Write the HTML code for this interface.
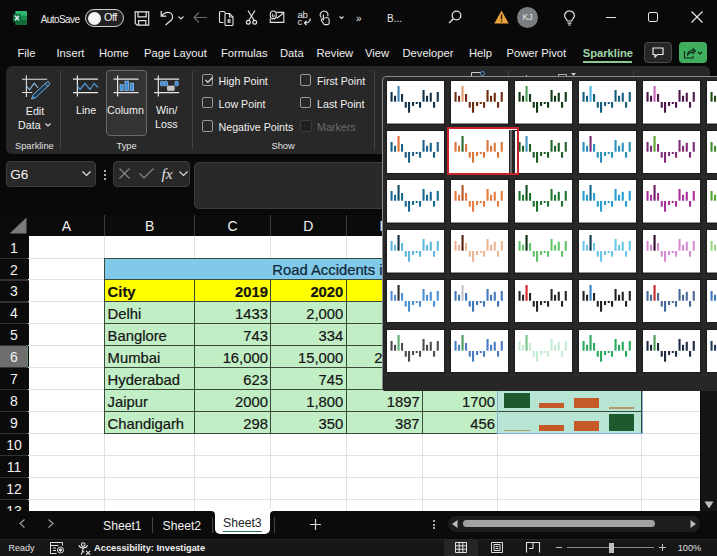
<!DOCTYPE html>
<html><head><meta charset="utf-8">
<style>
*{box-sizing:border-box}
html,body{margin:0;padding:0}
body{width:717px;height:556px;position:relative;overflow:hidden;background:#090909;font-family:"Liberation Sans",sans-serif;color:#e8e8e8}
.a{position:absolute;white-space:nowrap}
svg{position:absolute;overflow:visible}
.menu{top:46px;font-size:11.2px;line-height:14px;color:#f0f0f0}
.rib{background:#282828;border-radius:6px}
.lbl{font-size:10.7px;line-height:12px;color:#f0f0f0}
.glbl{font-size:9.3px;line-height:11px;color:#e0e0e0}
.cb{width:11.8px;height:11.8px;border:1px solid #9a9a9a;border-radius:2px}
.cell{font-size:14.8px;line-height:16px;color:#141414;-webkit-text-stroke:0.2px #141414}
.rh{left:0;width:28px;text-align:center;font-size:14px;line-height:16px;color:#f2f2f2}
</style></head><body>

<!-- TITLE BAR -->
<svg style="left:13px;top:11px" width="14" height="14" viewBox="0 0 14 14"><rect x="2.5" y="0" width="11.5" height="14" rx="1" fill="#1a8a4f"/><rect x="2.5" y="0" width="11.5" height="4.7" rx="1" fill="#2fb673"/><rect x="2.5" y="9.3" width="11.5" height="4.7" fill="#136b3a"/><rect x="0" y="3" width="8" height="8" rx="1" fill="#107040"/><path d="M2 4.8l4 4.4M6 4.8l-4 4.4" stroke="#f2f2f2" stroke-width="1.3"/></svg>
<div class="a" style="left:40.8px;top:13.5px;font-size:10px;line-height:12px;color:#ececec;letter-spacing:-0.6px">AutoSave</div>
<div class="a" style="left:85px;top:9px;width:39px;height:18px;border:1.3px solid #cfcfcf;border-radius:9px;background:#222"></div>
<div class="a" style="left:87.5px;top:11.5px;width:13px;height:13px;border-radius:50%;background:#f4f4f4"></div>
<div class="a" style="left:104px;top:11px;font-size:11px;line-height:12px;color:#f2f2f2;letter-spacing:-0.6px">Off</div>


<!-- save -->
<svg style="left:133.5px;top:10.5px" width="16" height="15" viewBox="0 0 16 15" fill="none" stroke="#e6e6e6" stroke-width="1.2"><path d="M1.2 0.9h13.5v13.3H3.2L1.2 12.2z"/><path d="M4 0.9v4.9h8.2V0.9"/><path d="M4.6 14.2v-4.5h7.2v4.5"/></svg>
<!-- undo -->
<svg style="left:159px;top:10px" width="16" height="16" viewBox="0 0 16 16" fill="none" stroke="#e6e6e6" stroke-width="1.2"><path d="M2.2 1v5.2h5.1"/><path d="M2.5 6C4.3 3.6 6.4 2.4 9 2.4c2.6 0 4.6 2 4.6 4.6 0 1.4-.6 2.5-1.4 3.3L6.5 15"/></svg>
<svg style="left:178px;top:16px" width="6" height="4" viewBox="0 0 6 4" fill="none" stroke="#d8d8d8" stroke-width="1.1"><path d="M0.5 0.5l2.5 2.5 2.5-2.5"/></svg>
<!-- back arrow dim -->
<svg style="left:193px;top:12px" width="14" height="11" viewBox="0 0 14 11" fill="none" stroke="#6a6a6a" stroke-width="1.2"><path d="M14 5.5H1M6 0.5L1 5.5l5 5"/></svg>
<!-- copy doc -->
<svg style="left:218px;top:10px" width="17" height="16" viewBox="0 0 17 16" fill="none" stroke="#e6e6e6" stroke-width="1.1"><path d="M5.5 12.5H2.5a1 1 0 0 1-1-1V2.5a1 1 0 0 1 1-1h3.5a1 1 0 0 1 1 1v1"/><path d="M7 14.5V4.5a1 1 0 0 1 1-1h3.5l3.5 3.5v7.5a1 1 0 0 1-1 1H8a1 1 0 0 1-1-1z"/><path d="M11.5 3.5v3.5H15"/><path d="M9.5 10h3M9.5 12h3" stroke-width="1.3"/></svg>
<!-- scissors -->
<svg style="left:246px;top:10px" width="11" height="15" viewBox="0 0 11 15" fill="none" stroke="#e6e6e6" stroke-width="1.2"><path d="M2 0.5l6.5 10.5M9 0.5L2.5 11"/><circle cx="2.3" cy="12.3" r="1.9"/><circle cx="8.7" cy="12.3" r="1.9"/></svg>
<!-- mail-ish -->
<svg style="left:269px;top:10px" width="16" height="14" viewBox="0 0 16 14" fill="none" stroke="#e6e6e6" stroke-width="1.1"><path d="M7.6 2.4H14.8V12.4H1.2V8.6"/><path d="M7.8 8.2L14.5 3.2"/><path d="M4.25 1a2.95 2.95 0 0 1 2.95 2.95v2a2.95 2.95 0 0 1-5.9 0v-2A2.95 2.95 0 0 1 4.25 1z"/><path d="M3.4 3.6v2.6a.9.9 0 0 0 1.8 0V4.8" stroke-width="0.9"/></svg>
<!-- abc -->
<div class="a" style="left:297.5px;top:10px;font-size:9.6px;line-height:9px;color:#e6e6e6;letter-spacing:-0.3px">ab</div>
<div class="a" style="left:297.5px;top:17px;font-size:9.6px;line-height:9px;color:#e6e6e6">c</div>
<svg style="left:302.5px;top:18px" width="8" height="7" viewBox="0 0 8 7" fill="none" stroke="#e6e6e6" stroke-width="1.2"><path d="M7.2 0.5c0 3-2 4.5-5.5 4.5M3.5 2.8L1.5 5l2 2"/></svg>
<!-- touch -->
<svg style="left:318px;top:9px" width="14" height="17" viewBox="0 0 14 17" fill="none" stroke="#e6e6e6" stroke-width="1.1"><path d="M3.4 8.6A3.8 3.8 0 1 1 9.6 7.3"/><path d="M5.4 5.4v6"/><path d="M5.4 9.4L3.9 10c-.8.4-.7 1.4-.1 2l1.8 2.7c.4.7 1 .9 1.6.9h2.2c1 0 1.7-.7 1.7-1.6v-3.6c0-.9-.6-1.5-1.5-1.6L7.2 8.5"/><path d="M5.6 9.2h1.6" stroke="#9a9a9a" stroke-width="1.3"/></svg>
<svg style="left:339px;top:16px" width="5" height="4" viewBox="0 0 5 4" fill="none" stroke="#d8d8d8" stroke-width="1.1"><path d="M0.5 0.5l2 2 2-2"/></svg>
<div class="a" style="left:356px;top:13px;font-size:10px;line-height:12px;color:#e6e6e6">&raquo;</div>
<div class="a" style="left:387px;top:13px;font-size:10px;line-height:12px;color:#e6e6e6">B...</div>
<!-- search -->
<svg style="left:448px;top:10px" width="14" height="14" viewBox="0 0 14 14" fill="none" stroke="#e6e6e6" stroke-width="1.3"><circle cx="8.5" cy="5.5" r="4.3"/><path d="M5.3 8.7L1 13"/></svg>
<!-- warning -->
<svg style="left:494px;top:10px" width="15" height="14" viewBox="0 0 15 14"><path d="M7.5 0.5L14.7 13.5H0.3z" fill="#e8a33c"/><path d="M7.5 4.5v5" stroke="#2a1a00" stroke-width="1.4"/><circle cx="7.5" cy="11.3" r="0.8" fill="#2a1a00"/></svg>
<!-- avatar -->
<div class="a" style="left:517px;top:7px;width:21px;height:21px;border-radius:50%;background:#787e82;color:#e8e8e8;font-size:8.5px;line-height:21px;text-align:center">KJ</div>
<!-- bulb -->
<svg style="left:563.5px;top:10.5px" width="11" height="15" viewBox="0 0 11 15" fill="none" stroke="#e6e6e6" stroke-width="1.2"><path d="M3.3 10c0-1.8-2.7-2.8-2.7-5.3a4.9 4.9 0 0 1 9.8 0c0 2.5-2.7 3.5-2.7 5.3z"/><path d="M3.6 12.2h3.8M4.2 14h2.6"/></svg>
<!-- window controls -->
<div class="a" style="left:606px;top:17px;width:10px;height:1.2px;background:#e6e6e6"></div>
<div class="a" style="left:648px;top:12px;width:10px;height:10px;border:1.2px solid #e6e6e6;border-radius:2px"></div>
<svg style="left:691px;top:11px" width="12" height="12" viewBox="0 0 12 12" stroke="#e6e6e6" stroke-width="1.2"><path d="M0.5 0.5l11 11M11.5 0.5l-11 11"/></svg>

<!-- MENU -->
<div class="a menu" style="left:17.5px">File</div>
<div class="a menu" style="left:56.5px">Insert</div>
<div class="a menu" style="left:99px">Home</div>
<div class="a menu" style="left:144px">Page Layout</div>
<div class="a menu" style="left:221px">Formulas</div>
<div class="a menu" style="left:280px">Data</div>
<div class="a menu" style="left:316.5px">Review</div>
<div class="a menu" style="left:365px">View</div>
<div class="a menu" style="left:402.5px">Developer</div>
<div class="a menu" style="left:469px">Help</div>
<div class="a menu" style="left:506.5px">Power Pivot</div>
<div class="a menu" style="left:582.7px;top:45.5px;color:#a3d6ab;font-weight:bold;font-size:11.2px">Sparkline</div>
<div class="a" style="left:582.7px;top:61.2px;width:49.3px;height:1.6px;background:#8cc796"></div>
<div class="a" style="left:644px;top:41.7px;width:28px;height:21.3px;border:1px solid #4a4a4a;border-radius:4px;background:#262626"></div>
<svg style="left:652px;top:46.5px" width="12" height="12" viewBox="0 0 12 12" fill="none" stroke="#ececec" stroke-width="1.2"><path d="M1 1h10v6.5H5.5L3 10V7.5H1z"/></svg>
<div class="a" style="left:679px;top:41.7px;width:28px;height:21.3px;border-radius:4px;background:#3fae5e"></div>
<svg style="left:683px;top:46px" width="20" height="13" viewBox="0 0 20 13" fill="none" stroke="#0e2a16" stroke-width="1.1"><path d="M1.5 5v7h8.5V10"/><path d="M4.5 9c0-3 2-4.5 5.5-4.5V2.5L12.5 5 10 7.5V6C7.5 6 6 7 4.5 9z"/><path d="M15 6l2 2 2-2"/></svg>

<!-- RIBBON -->
<div class="a rib" style="left:6px;top:66px;width:704px;height:87.5px"></div>
<div class="a" style="left:632.5px;top:71px;width:1px;height:6px;background:#454545"></div>
<div class="a" style="left:59.5px;top:71px;width:1px;height:78px;background:#454545"></div>
<div class="a" style="left:192px;top:71px;width:1px;height:78px;background:#454545"></div>
<div class="a" style="left:373.8px;top:71px;width:1px;height:78px;background:#454545"></div>
<div class="a" style="left:508px;top:71px;width:1px;height:6px;background:#454545"></div>
<!-- edit data icon -->
<svg style="left:21px;top:75px" width="30" height="26" viewBox="0 0 30 26" fill="none"><path d="M5.4 0.2v21.7M1 4.3h25.2M1 17.5h10.3" stroke="#e0e0e0" stroke-width="1.1"/><path d="M5.6 11l2.8 3.8 4.8-6.7 3.8 4.6" stroke="#8fc0ea" stroke-width="1.1"/><path d="M10.5 24L11.82 20.29 25.77 7.19A1.8 1.8 0 0 1 28.23 9.81L14.28 22.91z" fill="#17344f" stroke="#8fc0ea" stroke-width="0.9"/><path d="M10.5 24l1.2-3.4 2.3 2.2z" fill="#3f8fd8"/><path d="M26.6 11.3l-2.4-2.6" stroke="#8fc0ea" stroke-width="0.8"/></svg>
<div class="a lbl" style="left:23px;top:105px;width:24px;text-align:center">Edit</div>
<div class="a lbl" style="left:18px;top:119px">Data</div>
<svg style="left:45px;top:123px" width="6" height="4" viewBox="0 0 6 4" fill="none" stroke="#e0e0e0" stroke-width="1.1"><path d="M0.5 0.5l2.5 2.5 2.5-2.5"/></svg>
<div class="a glbl" style="left:15px;top:140.5px">Sparkline</div>
<!-- line icon -->
<svg style="left:72px;top:75px" width="27" height="22" viewBox="0 0 27 22" fill="none"><path d="M5.4 0.5v21M1 4.2h25M1 17.6h25" stroke="#e6e6e6" stroke-width="1.2"/><path d="M5.5 11l2.5 3.5 5-6 5 6 4-6 4 4" stroke="#4f95d3" stroke-width="1.2"/></svg>
<div class="a lbl" style="left:76px;top:104px">Line</div>
<!-- column selected -->
<div class="a" style="left:105.7px;top:69.5px;width:41.3px;height:66.6px;border:1px solid #686868;border-radius:4px;background:#333"></div>
<svg style="left:113px;top:75px" width="27" height="22" viewBox="0 0 27 22" fill="none"><path d="M4.6 0.5v21M0.5 4.2h25M0.5 17.6h25" stroke="#e6e6e6" stroke-width="1.2"/><rect x="7" y="9.7" width="3.2" height="5.8" fill="#3b8ad6" stroke="#8cc0ef" stroke-width="0.8"/><rect x="12" y="6.2" width="3.4" height="9.3" fill="#3b8ad6" stroke="#8cc0ef" stroke-width="0.8"/><rect x="17.2" y="8.2" width="3.4" height="7.3" fill="#3b8ad6" stroke="#8cc0ef" stroke-width="0.8"/></svg>
<div class="a lbl" style="left:107px;top:104px">Column</div>
<!-- win/loss -->
<svg style="left:154px;top:75px" width="27" height="22" viewBox="0 0 27 22" fill="none"><path d="M4.3 0.5v21M0.2 4.2h25M0.2 17.6h25" stroke="#e6e6e6" stroke-width="1.2"/><rect x="6.5" y="6.3" width="3.2" height="4.5" rx="0.8" fill="#3b8ad6" stroke="#8cc0ef" stroke-width="0.7"/><rect x="10.3" y="6.3" width="3.2" height="4.5" rx="0.8" fill="#3b8ad6" stroke="#8cc0ef" stroke-width="0.7"/><rect x="13.5" y="11" width="3.2" height="4.5" rx="0.8" fill="#bdbdbd" stroke="#eee" stroke-width="0.7"/><rect x="17" y="11" width="3.2" height="4.5" rx="0.8" fill="#bdbdbd" stroke="#eee" stroke-width="0.7"/><rect x="21" y="6.3" width="3.2" height="4.5" rx="0.8" fill="#3b8ad6" stroke="#8cc0ef" stroke-width="0.7"/></svg>
<div class="a lbl" style="left:156px;top:104px">Win/</div>
<div class="a lbl" style="left:155px;top:118px">Loss</div>
<div class="a glbl" style="left:116.5px;top:140.5px">Type</div>
<!-- show checkboxes -->
<div class="a cb" style="left:201.7px;top:74.2px"></div>
<svg style="left:205px;top:77.2px" width="8" height="6" viewBox="0 0 8 6" fill="none" stroke="#e6e6e6" stroke-width="1.2"><path d="M0.5 3l2.3 2.3L7.5 0.5"/></svg>
<div class="a lbl" style="left:218.5px;top:75px">High Point</div>
<div class="a cb" style="left:201.7px;top:96.7px"></div>
<div class="a lbl" style="left:218.5px;top:98px">Low Point</div>
<div class="a cb" style="left:201.7px;top:120.0px"></div>
<div class="a lbl" style="left:218.5px;top:121px">Negative Points</div>
<div class="a cb" style="left:299.7px;top:74.2px"></div>
<div class="a lbl" style="left:317px;top:75px">First Point</div>
<div class="a cb" style="left:299.7px;top:96.7px"></div>
<div class="a lbl" style="left:317px;top:98px">Last Point</div>
<div class="a cb" style="left:300.2px;top:120.0px;border-color:#3a3a3a;background:#1f1f1f"></div>
<div class="a lbl" style="left:317px;top:121px;color:#6a6a6a">Markers</div>
<div class="a glbl" style="left:271.5px;top:140.5px">Show</div>
<svg style="left:471px;top:71px" width="14" height="6" viewBox="0 0 14 6" fill="none"><path d="M0.5 6V1.5h9" stroke="#cfcfcf" stroke-width="1"/><circle cx="11.5" cy="2.5" r="2" stroke="#4f95d3" stroke-width="1"/></svg>
<div class="a" style="left:525.5px;top:74.5px;width:1.5px;height:1.5px;background:#bbb"></div><div class="a" style="left:558px;top:73.5px;width:9px;height:2.5px;border:1px solid #aaa;border-bottom:none"></div><svg style="left:570.5px;top:73px" width="5" height="3" viewBox="0 0 5 3"><path d="M0 0h5L2.5 3z" fill="#ccc"/></svg>


<!-- FORMULA BAR -->
<div class="a" style="left:6px;top:161px;width:90px;height:25.5px;border:1px solid #3c3c3c;border-radius:4px;background:#282828"></div>
<div class="a" style="left:10.3px;top:167.3px;font-size:13.6px;line-height:16px;color:#f0f0f0">G6</div>
<svg style="left:82px;top:171px" width="9" height="5" viewBox="0 0 9 5" fill="none" stroke="#e0e0e0" stroke-width="1.2"><path d="M0.5 0.5l4 4 4-4"/></svg>
<div class="a" style="left:104px;top:170px;width:1.8px;height:1.8px;background:#e0e0e0;border-radius:1px"></div>
<div class="a" style="left:104px;top:174px;width:1.8px;height:1.8px;background:#e0e0e0;border-radius:1px"></div>
<div class="a" style="left:104px;top:178px;width:1.8px;height:1.8px;background:#e0e0e0;border-radius:1px"></div>
<div class="a" style="left:113px;top:161px;width:76.5px;height:26px;border:1px solid #3c3c3c;border-radius:4px;background:#282828"></div>
<svg style="left:119px;top:168px" width="11" height="11" viewBox="0 0 11 11" stroke="#8a8a8a" stroke-width="1.1"><path d="M0.5 0.5l10 10M10.5 0.5l-10 10"/></svg>
<svg style="left:138.5px;top:168px" width="15" height="11" viewBox="0 0 15 11" fill="none" stroke="#8a8a8a" stroke-width="1.1"><path d="M0.5 5.5l4.5 4.5L14.5 0.5"/></svg>
<div class="a" style="left:161.5px;top:165.5px;font-family:'Liberation Serif',serif;font-style:italic;font-size:15.5px;line-height:16px;color:#e0e0e0">fx</div>
<svg style="left:178.5px;top:171px" width="9" height="5" viewBox="0 0 9 5" fill="none" stroke="#e0e0e0" stroke-width="1.1"><path d="M0.5 0.5l4 4 4-4"/></svg>
<div class="a" style="left:193.5px;top:161.5px;width:600px;height:47px;border:1px solid #3c3c3c;border-radius:5px;background:#292929"></div>


<!-- COLUMN HEADERS -->
<div class="a" style="left:0;top:214.5px;width:717px;height:21.5px;background:#0b0b0b"></div>
<svg style="left:9px;top:217px" width="18" height="17" viewBox="0 0 18 17"><path d="M17.5 0.5V16.5H0.5z" fill="#7a7a7a"/></svg>

<div class="a" style="left:28.0px;top:218px;width:76.6px;text-align:center;font-size:14px;line-height:16px;color:#f0f0f0">A</div>
<div class="a" style="left:104.1px;top:215px;width:1px;height:21px;background:#3a3a3a"></div>
<div class="a" style="left:104.6px;top:218px;width:90.1px;text-align:center;font-size:14px;line-height:16px;color:#f0f0f0">B</div>
<div class="a" style="left:194.2px;top:215px;width:1px;height:21px;background:#3a3a3a"></div>
<div class="a" style="left:194.7px;top:218px;width:75.9px;text-align:center;font-size:14px;line-height:16px;color:#f0f0f0">C</div>
<div class="a" style="left:270.1px;top:215px;width:1px;height:21px;background:#3a3a3a"></div>
<div class="a" style="left:270.6px;top:218px;width:75.4px;text-align:center;font-size:14px;line-height:16px;color:#f0f0f0">D</div>
<div class="a" style="left:345.5px;top:215px;width:1px;height:21px;background:#3a3a3a"></div>
<div class="a" style="left:346.0px;top:218px;width:76.3px;text-align:center;font-size:14px;line-height:16px;color:#f0f0f0">E</div>
<div class="a" style="left:421.8px;top:215px;width:1px;height:21px;background:#3a3a3a"></div>
<div class="a" style="left:422.3px;top:218px;width:75.4px;text-align:center;font-size:14px;line-height:16px;color:#f0f0f0">F</div>
<div class="a" style="left:497.2px;top:215px;width:1px;height:21px;background:#3a3a3a"></div>
<div class="a" style="left:497.7px;top:218px;width:143.3px;text-align:center;font-size:14px;line-height:16px;color:#f0f0f0">G</div>
<div class="a" style="left:640.5px;top:215px;width:1px;height:21px;background:#3a3a3a"></div>
<div class="a" style="left:641.0px;top:218px;width:76.0px;text-align:center;font-size:14px;line-height:16px;color:#f0f0f0">H</div>
<div class="a" style="left:716.5px;top:215px;width:1px;height:21px;background:#3a3a3a"></div>

<!-- GRID -->
<div class="a" style="left:28px;top:236px;width:689px;height:274.5px;background:#fff"></div>
<div class="a" style="left:0;top:236px;width:28.5px;height:274.5px;background:#0b0b0b"></div>
<div class="a" style="left:0;top:345.8px;width:27px;height:22px;background:#6e6e6e"></div>
<div class="a" style="left:27px;top:345.8px;width:1.2px;height:22px;background:#5c8f6a"></div>

<div class="a rh" style="top:239.5px">1</div>
<div class="a" style="left:0;top:257.5px;width:28.5px;height:1.2px;background:#333"></div>
<div class="a" style="left:28px;top:257.5px;width:689px;height:1px;background:#e1e1e1"></div>
<div class="a rh" style="top:261.5px">2</div>
<div class="a" style="left:0;top:279.4px;width:28.5px;height:1.2px;background:#333"></div>
<div class="a" style="left:28px;top:279.4px;width:689px;height:1px;background:#e1e1e1"></div>
<div class="a rh" style="top:283.4px">3</div>
<div class="a" style="left:0;top:301.4px;width:28.5px;height:1.2px;background:#333"></div>
<div class="a" style="left:28px;top:301.4px;width:689px;height:1px;background:#e1e1e1"></div>
<div class="a rh" style="top:305.4px">4</div>
<div class="a" style="left:0;top:323.3px;width:28.5px;height:1.2px;background:#333"></div>
<div class="a" style="left:28px;top:323.3px;width:689px;height:1px;background:#e1e1e1"></div>
<div class="a rh" style="top:327.3px">5</div>
<div class="a" style="left:0;top:345.3px;width:28.5px;height:1.2px;background:#333"></div>
<div class="a" style="left:28px;top:345.3px;width:689px;height:1px;background:#e1e1e1"></div>
<div class="a rh" style="top:349.3px">6</div>
<div class="a" style="left:0;top:367.3px;width:28.5px;height:1.2px;background:#333"></div>
<div class="a" style="left:28px;top:367.3px;width:689px;height:1px;background:#e1e1e1"></div>
<div class="a rh" style="top:371.3px">7</div>
<div class="a" style="left:0;top:389.2px;width:28.5px;height:1.2px;background:#333"></div>
<div class="a" style="left:28px;top:389.2px;width:689px;height:1px;background:#e1e1e1"></div>
<div class="a rh" style="top:393.2px">8</div>
<div class="a" style="left:0;top:411.2px;width:28.5px;height:1.2px;background:#333"></div>
<div class="a" style="left:28px;top:411.2px;width:689px;height:1px;background:#e1e1e1"></div>
<div class="a rh" style="top:415.2px">9</div>
<div class="a" style="left:0;top:433.1px;width:28.5px;height:1.2px;background:#333"></div>
<div class="a" style="left:28px;top:433.1px;width:689px;height:1px;background:#e1e1e1"></div>
<div class="a rh" style="top:437.1px">10</div>
<div class="a" style="left:0;top:455.1px;width:28.5px;height:1.2px;background:#333"></div>
<div class="a" style="left:28px;top:455.1px;width:689px;height:1px;background:#e1e1e1"></div>
<div class="a rh" style="top:459.1px">11</div>
<div class="a" style="left:0;top:477.1px;width:28.5px;height:1.2px;background:#333"></div>
<div class="a" style="left:28px;top:477.1px;width:689px;height:1px;background:#e1e1e1"></div>
<div class="a rh" style="top:481.1px">12</div>
<div class="a" style="left:0;top:499.0px;width:28.5px;height:1.2px;background:#333"></div>
<div class="a" style="left:28px;top:499.0px;width:689px;height:1px;background:#e1e1e1"></div>
<div class="a rh" style="top:503.0px">13</div>
<div class="a" style="left:0;top:521.0px;width:28.5px;height:1.2px;background:#333"></div>
<div class="a" style="left:28px;top:521.0px;width:689px;height:1px;background:#e1e1e1"></div>
<div class="a" style="left:104.1px;top:236px;width:1px;height:274.5px;background:#e1e1e1"></div>
<div class="a" style="left:194.2px;top:236px;width:1px;height:274.5px;background:#e1e1e1"></div>
<div class="a" style="left:270.1px;top:236px;width:1px;height:274.5px;background:#e1e1e1"></div>
<div class="a" style="left:345.5px;top:236px;width:1px;height:274.5px;background:#e1e1e1"></div>
<div class="a" style="left:421.8px;top:236px;width:1px;height:274.5px;background:#e1e1e1"></div>
<div class="a" style="left:497.2px;top:236px;width:1px;height:274.5px;background:#e1e1e1"></div>
<div class="a" style="left:640.5px;top:236px;width:1px;height:274.5px;background:#e1e1e1"></div>
<div class="a" style="left:716.5px;top:236px;width:1px;height:274.5px;background:#e1e1e1"></div>

<!-- TABLE -->
<div class="a" style="left:104.3px;top:258.0px;width:536.7px;height:22.0px;background:#80c9e8"></div>
<div class="a" style="left:104.3px;top:279.9px;width:536.7px;height:22.0px;background:#ffff00"></div>
<div class="a" style="left:104.3px;top:301.9px;width:536.7px;height:131.8px;background:#c1eec5"></div>
<div class="a" style="left:497.7px;top:389.7px;width:144.3px;height:43.9px;background:#b6e6d3"></div>
<div class="a" style="left:104.1px;top:257.5px;width:536.9px;height:1px;background:#3a4a3a"></div>
<div class="a" style="left:104.1px;top:279.4px;width:536.9px;height:1px;background:#3a4a3a"></div>
<div class="a" style="left:104.1px;top:301.4px;width:536.9px;height:1px;background:#3a4a3a"></div>
<div class="a" style="left:104.1px;top:323.3px;width:536.9px;height:1px;background:#3a4a3a"></div>
<div class="a" style="left:104.1px;top:345.3px;width:536.9px;height:1px;background:#3a4a3a"></div>
<div class="a" style="left:104.1px;top:367.3px;width:536.9px;height:1px;background:#3a4a3a"></div>
<div class="a" style="left:104.1px;top:389.2px;width:536.9px;height:1px;background:#3a4a3a"></div>
<div class="a" style="left:104.1px;top:411.2px;width:536.9px;height:1px;background:#3a4a3a"></div>
<div class="a" style="left:104.1px;top:433.1px;width:536.9px;height:1px;background:#3a4a3a"></div>
<div class="a" style="left:104.1px;top:258.0px;width:1px;height:175.7px;background:#3a4a3a"></div>
<div class="a" style="left:194.2px;top:279.9px;width:1px;height:153.7px;background:#3a4a3a"></div>
<div class="a" style="left:270.1px;top:279.9px;width:1px;height:153.7px;background:#3a4a3a"></div>
<div class="a" style="left:345.5px;top:279.9px;width:1px;height:153.7px;background:#3a4a3a"></div>
<div class="a" style="left:421.8px;top:279.9px;width:1px;height:153.7px;background:#3a4a3a"></div>
<div class="a" style="left:497.2px;top:279.9px;width:1px;height:153.7px;background:#3a4a3a"></div>
<div class="a" style="left:640.5px;top:258.0px;width:1px;height:175.7px;background:#3a4a3a"></div>
<div class="a" style="left:497px;top:389.2px;width:145.5px;height:44.6px;border:1.3px solid #86b0de;border-top-color:#5c8db5"></div>
<div class="a cell" style="left:272.3px;top:262.1px;color:#0e2841">Road Accidents in India</div>
<div class="a cell" style="left:107.6px;top:284.0px;font-weight:bold;">City</div>
<div class="a cell" style="right:449.1px;top:284.0px;font-weight:bold;">2019</div>
<div class="a cell" style="right:373.7px;top:284.0px;font-weight:bold;">2020</div>
<div class="a cell" style="right:297.4px;top:284.0px;font-weight:bold;">2021</div>
<div class="a cell" style="right:222.0px;top:284.0px;font-weight:bold;">2022</div>
<div class="a cell" style="left:107.6px;top:306.0px;">Delhi</div>
<div class="a cell" style="right:449.1px;top:306.0px;">1433</div>
<div class="a cell" style="right:373.7px;top:306.0px;">2,000</div>
<div class="a cell" style="right:297.4px;top:306.0px;">1800</div>
<div class="a cell" style="right:222.0px;top:306.0px;">1600</div>
<div class="a cell" style="left:107.6px;top:327.9px;">Banglore</div>
<div class="a cell" style="right:449.1px;top:327.9px;">743</div>
<div class="a cell" style="right:373.7px;top:327.9px;">334</div>
<div class="a cell" style="right:297.4px;top:327.9px;">500</div>
<div class="a cell" style="right:222.0px;top:327.9px;">450</div>
<div class="a cell" style="left:107.6px;top:349.9px;">Mumbai</div>
<div class="a cell" style="right:449.1px;top:349.9px;">16,000</div>
<div class="a cell" style="right:373.7px;top:349.9px;">15,000</div>
<div class="a cell" style="right:297.4px;top:349.9px;">20,000</div>
<div class="a cell" style="right:222.0px;top:349.9px;">18,000</div>
<div class="a cell" style="left:107.6px;top:371.9px;">Hyderabad</div>
<div class="a cell" style="right:449.1px;top:371.9px;">623</div>
<div class="a cell" style="right:373.7px;top:371.9px;">745</div>
<div class="a cell" style="right:297.4px;top:371.9px;">700</div>
<div class="a cell" style="right:222.0px;top:371.9px;">650</div>
<div class="a cell" style="left:107.6px;top:393.8px;">Jaipur</div>
<div class="a cell" style="right:449.1px;top:393.8px;">2000</div>
<div class="a cell" style="right:373.7px;top:393.8px;">1,800</div>
<div class="a cell" style="right:297.4px;top:393.8px;">1897</div>
<div class="a cell" style="right:222.0px;top:393.8px;">1700</div>
<div class="a cell" style="left:107.6px;top:415.8px;">Chandigarh</div>
<div class="a cell" style="right:449.1px;top:415.8px;">298</div>
<div class="a cell" style="right:373.7px;top:415.8px;">350</div>
<div class="a cell" style="right:297.4px;top:415.8px;">387</div>
<div class="a cell" style="right:222.0px;top:415.8px;">456</div>

<div class="a" style="left:504px;top:393.3px;width:25.5px;height:15.1px;background:#1c5a2e"></div>
<div class="a" style="left:539px;top:402.9px;width:25.3px;height:5.5px;background:#c55a28"></div>
<div class="a" style="left:574px;top:398.4px;width:25.4px;height:10px;background:#c55a28"></div>
<div class="a" style="left:609px;top:407.3px;width:25px;height:1.3px;background:#b49a6a"></div>
<div class="a" style="left:504px;top:429.6px;width:25.5px;height:1.3px;background:#b49a6a"></div>
<div class="a" style="left:539px;top:425px;width:25.3px;height:5.8px;background:#c55a28"></div>
<div class="a" style="left:574px;top:421px;width:25.4px;height:9.8px;background:#c55a28"></div>
<div class="a" style="left:609px;top:414px;width:25px;height:16.8px;background:#1c5a2e"></div>


<!-- SHEET TABS -->
<div class="a" style="left:0;top:510.5px;width:717px;height:27.5px;background:#0b0b0b"></div>
<div class="a" style="left:699.5px;top:236px;width:17.5px;height:274.5px;background:#151515;border-left:1px solid #0a0a0a"></div>
<svg style="left:703.5px;top:500.5px" width="10" height="8" viewBox="0 0 10 8"><path d="M0.5 0.5h9L5 7.5z" fill="#bdbdbd"/></svg>
<svg style="left:19px;top:519px" width="6" height="9" viewBox="0 0 6 9" fill="none" stroke="#a0a0a0" stroke-width="1.1"><path d="M5.5 0.5l-4.5 4 4.5 4"/></svg>
<svg style="left:48px;top:519px" width="6" height="9" viewBox="0 0 6 9" fill="none" stroke="#a0a0a0" stroke-width="1.1"><path d="M0.5 0.5l4.5 4-4.5 4"/></svg>
<div class="a" style="left:103px;top:519px;font-size:12.2px;line-height:15px;color:#f0f0f0">Sheet1</div>
<div class="a" style="left:151.5px;top:517px;width:1px;height:16px;background:#444"></div>
<div class="a" style="left:162.5px;top:519px;font-size:12.2px;line-height:15px;color:#f0f0f0">Sheet2</div>
<div class="a" style="left:212px;top:517px;width:1px;height:16px;background:#444"></div>
<div class="a" style="left:210px;top:510px;width:64.5px;height:5px;background:#fff"></div><div class="a" style="left:204px;top:510.5px;width:10.5px;height:12px;background:#0b0b0b;border-radius:0 4px 0 0"></div><div class="a" style="left:270px;top:510.5px;width:10.5px;height:12px;background:#0b0b0b;border-radius:4px 0 0 0"></div>
<div class="a" style="left:214.5px;top:508px;width:55.5px;height:26px;background:#fff;border-radius:0 0 5px 5px"></div><div class="a" style="left:212px;top:517px;width:1px;height:16px;background:#444"></div><div class="a" style="left:274px;top:517px;width:1px;height:16px;background:#444"></div>
<div class="a" style="left:223px;top:516px;font-size:12.2px;line-height:15px;color:#222">Sheet3</div>
<div class="a" style="left:223px;top:530.6px;width:38.7px;height:1.6px;background:#2f7a52"></div>
<div class="a" style="left:274px;top:517px;width:1px;height:16px;background:#444"></div>
<svg style="left:309.5px;top:518.5px" width="11" height="11" viewBox="0 0 11 11" stroke="#d8d8d8" stroke-width="1.2"><path d="M5.5 0v11M0 5.5h11"/></svg>
<div class="a" style="left:433px;top:520px;width:2px;height:2px;background:#e0e0e0;border-radius:1px"></div>
<div class="a" style="left:433px;top:523.5px;width:2px;height:2px;background:#e0e0e0;border-radius:1px"></div>
<div class="a" style="left:433px;top:527px;width:2px;height:2px;background:#e0e0e0;border-radius:1px"></div>
<div class="a" style="left:448px;top:516px;width:252px;height:16px;background:#1d1d1d;border-radius:8px"></div>
<svg style="left:451.5px;top:519.5px" width="6" height="8" viewBox="0 0 6 8"><path d="M5.5 0v8L0 4z" fill="#bdbdbd"/></svg>
<svg style="left:690px;top:519.5px" width="6" height="8" viewBox="0 0 6 8"><path d="M0.5 0v8L6 4z" fill="#bdbdbd"/></svg>
<div class="a" style="left:462.7px;top:520.2px;width:192.5px;height:7px;background:#a2a2a2;border-radius:3.5px"></div>

<!-- STATUS BAR -->
<div class="a" style="left:0;top:538.5px;width:717px;height:17.5px;background:#161616;border-top:1px solid #262626"></div>
<div class="a" style="left:8.5px;top:543px;font-size:9px;line-height:11px;color:#e0e0e0">Ready</div>
<svg style="left:50px;top:542px" width="14" height="12" viewBox="0 0 14 12" fill="none" stroke="#e0e0e0" stroke-width="1"><path d="M0.5 0.5h12v3M0.5 0.5v11h6M0.5 3.5h8"/><path d="M3 6h3M3 8.5h3"/><circle cx="10.5" cy="8" r="3"/><circle cx="10.5" cy="8" r="1.2" fill="#e0e0e0"/></svg>
<svg style="left:78px;top:542px" width="13" height="13" viewBox="0 0 13 13" fill="none" stroke="#e6e6e6" stroke-width="1.1"><circle cx="5.2" cy="2.6" r="1.8"/><path d="M0.8 3.2C1.8 5.5 3.2 6 5.2 5.8 7.2 6 8.6 5.5 9.6 3.2"/><path d="M5.2 5.8L4.6 9.2 3.2 12.5M4.6 9.2L6.2 10.2"/><path d="M8 8.8l4.2 4M12.2 8.8l-4.2 4"/></svg>
<div class="a" style="left:94px;top:543px;font-size:9.3px;line-height:11px;color:#f0f0f0;font-weight:bold">Accessibility: Investigate</div>
<div class="a" style="left:443.8px;top:539px;width:34.2px;height:17px;background:#262626"></div>
<svg style="left:455px;top:541.5px" width="12" height="11" viewBox="0 0 12 11" fill="none" stroke="#e0e0e0" stroke-width="1"><path d="M0.5 0.5h11v10h-11zM0.5 3.8h11M0.5 7.2h11M4.2 0.5v10M7.8 0.5v10"/></svg>
<svg style="left:491px;top:541.5px" width="12" height="11" viewBox="0 0 12 11" fill="none" stroke="#e0e0e0" stroke-width="1"><path d="M0.5 0.5h11v10h-11z"/><path d="M3 2.5h6v6H3zM4.5 4.5h3M4.5 6.5h3"/></svg>
<svg style="left:525.5px;top:541.5px" width="14" height="11" viewBox="0 0 14 11" fill="none" stroke="#e0e0e0" stroke-width="1.1"><path d="M0.5 10.5V0.5h13v10M7 0.5v6h-4"/></svg>
<div class="a" style="left:555.5px;top:546.5px;width:6px;height:1px;background:#bdbdbd"></div>
<div class="a" style="left:567px;top:546.5px;width:87px;height:1px;background:#8a8a8a"></div>
<div class="a" style="left:608.5px;top:543px;width:5px;height:9.5px;background:#bdbdbd"></div>
<svg style="left:659px;top:543.5px" width="7" height="7" viewBox="0 0 7 7" stroke="#bdbdbd" stroke-width="1"><path d="M3.5 0v7M0 3.5h7"/></svg>
<div class="a" style="left:677.7px;top:543px;font-size:9.2px;line-height:11px;color:#e0e0e0">100%</div>

<!-- GALLERY -->
<div class="a" style="left:382px;top:76px;width:340px;height:315px;background:#272727;border:1px solid #8c8c8c;border-bottom:none;border-right:none;border-radius:5px 0 0 3px"></div>
<div class="a" style="left:382.5px;top:378px;width:340px;height:13px;background:#272727;border-radius:0 0 0 3px;border-left:1px solid #1a1a1a"></div>
<svg style="left:386.8px;top:81.0px;outline:1px solid #1b1b1b" width="57.5" height="42.5"><rect width="57.5" height="42.5" fill="#fff"/><rect x="3.5" y="11.0" width="2.1" height="9.7" fill="#13324a"/><rect x="7.0" y="14.8" width="2.1" height="5.9" fill="#13324a"/><rect x="10.5" y="5.0" width="2.1" height="15.7" fill="#3f82b5"/><rect x="14.0" y="13.0" width="2.1" height="7.7" fill="#13324a"/><rect x="17.7" y="21.0" width="2.1" height="5.7" fill="#13324a"/><rect x="21.0" y="21.0" width="2.1" height="10.7" fill="#13324a"/><rect x="25.0" y="21.0" width="2.1" height="4.0" fill="#13324a"/><rect x="28.7" y="21.0" width="2.1" height="2.0" fill="#13324a"/><rect x="32.0" y="21.0" width="2.1" height="5.7" fill="#13324a"/><rect x="35.5" y="9.0" width="2.1" height="11.7" fill="#13324a"/><rect x="39.0" y="14.8" width="2.1" height="5.9" fill="#13324a"/><rect x="42.7" y="11.8" width="2.1" height="8.9" fill="#13324a"/><rect x="46.0" y="21.0" width="2.1" height="5.7" fill="#13324a"/><rect x="49.7" y="11.0" width="2.1" height="9.7" fill="#13324a"/></svg>
<svg style="left:450.8px;top:81.0px;outline:1px solid #1b1b1b" width="57.5" height="42.5"><rect width="57.5" height="42.5" fill="#fff"/><rect x="3.5" y="11.0" width="2.1" height="9.7" fill="#6b2d0e"/><rect x="7.0" y="14.8" width="2.1" height="5.9" fill="#6b2d0e"/><rect x="10.5" y="5.0" width="2.1" height="15.7" fill="#e39a6c"/><rect x="14.0" y="13.0" width="2.1" height="7.7" fill="#6b2d0e"/><rect x="17.7" y="21.0" width="2.1" height="5.7" fill="#6b2d0e"/><rect x="21.0" y="21.0" width="2.1" height="10.7" fill="#6b2d0e"/><rect x="25.0" y="21.0" width="2.1" height="4.0" fill="#6b2d0e"/><rect x="28.7" y="21.0" width="2.1" height="2.0" fill="#6b2d0e"/><rect x="32.0" y="21.0" width="2.1" height="5.7" fill="#6b2d0e"/><rect x="35.5" y="9.0" width="2.1" height="11.7" fill="#6b2d0e"/><rect x="39.0" y="14.8" width="2.1" height="5.9" fill="#6b2d0e"/><rect x="42.7" y="11.8" width="2.1" height="8.9" fill="#6b2d0e"/><rect x="46.0" y="21.0" width="2.1" height="5.7" fill="#6b2d0e"/><rect x="49.7" y="11.0" width="2.1" height="9.7" fill="#6b2d0e"/></svg>
<svg style="left:514.8px;top:81.0px;outline:1px solid #1b1b1b" width="57.5" height="42.5"><rect width="57.5" height="42.5" fill="#fff"/><rect x="3.5" y="11.0" width="2.1" height="9.7" fill="#0f3a15"/><rect x="7.0" y="14.8" width="2.1" height="5.9" fill="#0f3a15"/><rect x="10.5" y="5.0" width="2.1" height="15.7" fill="#4f9a55"/><rect x="14.0" y="13.0" width="2.1" height="7.7" fill="#0f3a15"/><rect x="17.7" y="21.0" width="2.1" height="5.7" fill="#0f3a15"/><rect x="21.0" y="21.0" width="2.1" height="10.7" fill="#0f3a15"/><rect x="25.0" y="21.0" width="2.1" height="4.0" fill="#0f3a15"/><rect x="28.7" y="21.0" width="2.1" height="2.0" fill="#0f3a15"/><rect x="32.0" y="21.0" width="2.1" height="5.7" fill="#0f3a15"/><rect x="35.5" y="9.0" width="2.1" height="11.7" fill="#0f3a15"/><rect x="39.0" y="14.8" width="2.1" height="5.9" fill="#0f3a15"/><rect x="42.7" y="11.8" width="2.1" height="8.9" fill="#0f3a15"/><rect x="46.0" y="21.0" width="2.1" height="5.7" fill="#0f3a15"/><rect x="49.7" y="11.0" width="2.1" height="9.7" fill="#0f3a15"/></svg>
<svg style="left:578.8px;top:81.0px;outline:1px solid #1b1b1b" width="57.5" height="42.5"><rect width="57.5" height="42.5" fill="#fff"/><rect x="3.5" y="11.0" width="2.1" height="9.7" fill="#145d80"/><rect x="7.0" y="14.8" width="2.1" height="5.9" fill="#145d80"/><rect x="10.5" y="5.0" width="2.1" height="15.7" fill="#4db3e3"/><rect x="14.0" y="13.0" width="2.1" height="7.7" fill="#145d80"/><rect x="17.7" y="21.0" width="2.1" height="5.7" fill="#145d80"/><rect x="21.0" y="21.0" width="2.1" height="10.7" fill="#145d80"/><rect x="25.0" y="21.0" width="2.1" height="4.0" fill="#145d80"/><rect x="28.7" y="21.0" width="2.1" height="2.0" fill="#145d80"/><rect x="32.0" y="21.0" width="2.1" height="5.7" fill="#145d80"/><rect x="35.5" y="9.0" width="2.1" height="11.7" fill="#145d80"/><rect x="39.0" y="14.8" width="2.1" height="5.9" fill="#145d80"/><rect x="42.7" y="11.8" width="2.1" height="8.9" fill="#145d80"/><rect x="46.0" y="21.0" width="2.1" height="5.7" fill="#145d80"/><rect x="49.7" y="11.0" width="2.1" height="9.7" fill="#145d80"/></svg>
<svg style="left:642.8px;top:81.0px;outline:1px solid #1b1b1b" width="57.5" height="42.5"><rect width="57.5" height="42.5" fill="#fff"/><rect x="3.5" y="11.0" width="2.1" height="9.7" fill="#4e1649"/><rect x="7.0" y="14.8" width="2.1" height="5.9" fill="#4e1649"/><rect x="10.5" y="5.0" width="2.1" height="15.7" fill="#c866b8"/><rect x="14.0" y="13.0" width="2.1" height="7.7" fill="#4e1649"/><rect x="17.7" y="21.0" width="2.1" height="5.7" fill="#4e1649"/><rect x="21.0" y="21.0" width="2.1" height="10.7" fill="#4e1649"/><rect x="25.0" y="21.0" width="2.1" height="4.0" fill="#4e1649"/><rect x="28.7" y="21.0" width="2.1" height="2.0" fill="#4e1649"/><rect x="32.0" y="21.0" width="2.1" height="5.7" fill="#4e1649"/><rect x="35.5" y="9.0" width="2.1" height="11.7" fill="#4e1649"/><rect x="39.0" y="14.8" width="2.1" height="5.9" fill="#4e1649"/><rect x="42.7" y="11.8" width="2.1" height="8.9" fill="#4e1649"/><rect x="46.0" y="21.0" width="2.1" height="5.7" fill="#4e1649"/><rect x="49.7" y="11.0" width="2.1" height="9.7" fill="#4e1649"/></svg>
<svg style="left:706.8px;top:81.0px;outline:1px solid #1b1b1b" width="57.5" height="42.5"><rect width="57.5" height="42.5" fill="#fff"/><rect x="3.5" y="11.0" width="2.1" height="9.7" fill="#1f4a10"/><rect x="7.0" y="14.8" width="2.1" height="5.9" fill="#1f4a10"/><rect x="10.5" y="5.0" width="2.1" height="15.7" fill="#7fc060"/><rect x="14.0" y="13.0" width="2.1" height="7.7" fill="#1f4a10"/><rect x="17.7" y="21.0" width="2.1" height="5.7" fill="#1f4a10"/><rect x="21.0" y="21.0" width="2.1" height="10.7" fill="#1f4a10"/><rect x="25.0" y="21.0" width="2.1" height="4.0" fill="#1f4a10"/><rect x="28.7" y="21.0" width="2.1" height="2.0" fill="#1f4a10"/><rect x="32.0" y="21.0" width="2.1" height="5.7" fill="#1f4a10"/><rect x="35.5" y="9.0" width="2.1" height="11.7" fill="#1f4a10"/><rect x="39.0" y="14.8" width="2.1" height="5.9" fill="#1f4a10"/><rect x="42.7" y="11.8" width="2.1" height="8.9" fill="#1f4a10"/><rect x="46.0" y="21.0" width="2.1" height="5.7" fill="#1f4a10"/><rect x="49.7" y="11.0" width="2.1" height="9.7" fill="#1f4a10"/></svg>
<svg style="left:386.8px;top:130.7px;outline:1px solid #1b1b1b" width="57.5" height="42.5"><rect width="57.5" height="42.5" fill="#fff"/><rect x="3.5" y="11.0" width="2.1" height="9.7" fill="#1c6088"/><rect x="7.0" y="14.8" width="2.1" height="5.9" fill="#1c6088"/><rect x="10.5" y="5.0" width="2.1" height="15.7" fill="#e07030"/><rect x="14.0" y="13.0" width="2.1" height="7.7" fill="#1c6088"/><rect x="17.7" y="21.0" width="2.1" height="5.7" fill="#1c6088"/><rect x="21.0" y="21.0" width="2.1" height="10.7" fill="#1c6088"/><rect x="25.0" y="21.0" width="2.1" height="4.0" fill="#1c6088"/><rect x="28.7" y="21.0" width="2.1" height="2.0" fill="#1c6088"/><rect x="32.0" y="21.0" width="2.1" height="5.7" fill="#1c6088"/><rect x="35.5" y="9.0" width="2.1" height="11.7" fill="#1c6088"/><rect x="39.0" y="14.8" width="2.1" height="5.9" fill="#1c6088"/><rect x="42.7" y="11.8" width="2.1" height="8.9" fill="#1c6088"/><rect x="46.0" y="21.0" width="2.1" height="5.7" fill="#1c6088"/><rect x="49.7" y="11.0" width="2.1" height="9.7" fill="#1c6088"/></svg>
<div class="a" style="left:447px;top:127.3px;width:71.7px;height:47.5px;background:#fff"></div>
<svg style="left:450.8px;top:130.7px" width="57.5" height="42.5"><rect width="57.5" height="42.5" fill="#fff"/><rect x="3.5" y="11.0" width="2.1" height="9.7" fill="#d9743c"/><rect x="7.0" y="14.8" width="2.1" height="5.9" fill="#d9743c"/><rect x="10.5" y="5.0" width="2.1" height="15.7" fill="#2a6a2f"/><rect x="14.0" y="13.0" width="2.1" height="7.7" fill="#d9743c"/><rect x="17.7" y="21.0" width="2.1" height="5.7" fill="#d9743c"/><rect x="21.0" y="21.0" width="2.1" height="10.7" fill="#d9743c"/><rect x="25.0" y="21.0" width="2.1" height="4.0" fill="#d9743c"/><rect x="28.7" y="21.0" width="2.1" height="2.0" fill="#d9743c"/><rect x="32.0" y="21.0" width="2.1" height="5.7" fill="#d9743c"/><rect x="35.5" y="9.0" width="2.1" height="11.7" fill="#d9743c"/><rect x="39.0" y="14.8" width="2.1" height="5.9" fill="#d9743c"/><rect x="42.7" y="11.8" width="2.1" height="8.9" fill="#d9743c"/><rect x="46.0" y="21.0" width="2.1" height="5.7" fill="#d9743c"/><rect x="49.7" y="11.0" width="2.1" height="9.7" fill="#d9743c"/></svg>
<svg style="left:514.8px;top:130.7px;outline:1px solid #1b1b1b" width="57.5" height="42.5"><rect width="57.5" height="42.5" fill="#fff"/><rect x="3.5" y="11.0" width="2.1" height="9.7" fill="#1f5f28"/><rect x="7.0" y="14.8" width="2.1" height="5.9" fill="#1f5f28"/><rect x="10.5" y="5.0" width="2.1" height="15.7" fill="#3f96c6"/><rect x="14.0" y="13.0" width="2.1" height="7.7" fill="#1f5f28"/><rect x="17.7" y="21.0" width="2.1" height="5.7" fill="#1f5f28"/><rect x="21.0" y="21.0" width="2.1" height="10.7" fill="#1f5f28"/><rect x="25.0" y="21.0" width="2.1" height="4.0" fill="#1f5f28"/><rect x="28.7" y="21.0" width="2.1" height="2.0" fill="#1f5f28"/><rect x="32.0" y="21.0" width="2.1" height="5.7" fill="#1f5f28"/><rect x="35.5" y="9.0" width="2.1" height="11.7" fill="#1f5f28"/><rect x="39.0" y="14.8" width="2.1" height="5.9" fill="#1f5f28"/><rect x="42.7" y="11.8" width="2.1" height="8.9" fill="#1f5f28"/><rect x="46.0" y="21.0" width="2.1" height="5.7" fill="#1f5f28"/><rect x="49.7" y="11.0" width="2.1" height="9.7" fill="#1f5f28"/></svg>
<svg style="left:578.8px;top:130.7px;outline:1px solid #1b1b1b" width="57.5" height="42.5"><rect width="57.5" height="42.5" fill="#fff"/><rect x="3.5" y="11.0" width="2.1" height="9.7" fill="#2a90ba"/><rect x="7.0" y="14.8" width="2.1" height="5.9" fill="#2a90ba"/><rect x="10.5" y="5.0" width="2.1" height="15.7" fill="#7a2a74"/><rect x="14.0" y="13.0" width="2.1" height="7.7" fill="#2a90ba"/><rect x="17.7" y="21.0" width="2.1" height="5.7" fill="#2a90ba"/><rect x="21.0" y="21.0" width="2.1" height="10.7" fill="#2a90ba"/><rect x="25.0" y="21.0" width="2.1" height="4.0" fill="#2a90ba"/><rect x="28.7" y="21.0" width="2.1" height="2.0" fill="#2a90ba"/><rect x="32.0" y="21.0" width="2.1" height="5.7" fill="#2a90ba"/><rect x="35.5" y="9.0" width="2.1" height="11.7" fill="#2a90ba"/><rect x="39.0" y="14.8" width="2.1" height="5.9" fill="#2a90ba"/><rect x="42.7" y="11.8" width="2.1" height="8.9" fill="#2a90ba"/><rect x="46.0" y="21.0" width="2.1" height="5.7" fill="#2a90ba"/><rect x="49.7" y="11.0" width="2.1" height="9.7" fill="#2a90ba"/></svg>
<svg style="left:642.8px;top:130.7px;outline:1px solid #1b1b1b" width="57.5" height="42.5"><rect width="57.5" height="42.5" fill="#fff"/><rect x="3.5" y="11.0" width="2.1" height="9.7" fill="#802a78"/><rect x="7.0" y="14.8" width="2.1" height="5.9" fill="#802a78"/><rect x="10.5" y="5.0" width="2.1" height="15.7" fill="#5fa530"/><rect x="14.0" y="13.0" width="2.1" height="7.7" fill="#802a78"/><rect x="17.7" y="21.0" width="2.1" height="5.7" fill="#802a78"/><rect x="21.0" y="21.0" width="2.1" height="10.7" fill="#802a78"/><rect x="25.0" y="21.0" width="2.1" height="4.0" fill="#802a78"/><rect x="28.7" y="21.0" width="2.1" height="2.0" fill="#802a78"/><rect x="32.0" y="21.0" width="2.1" height="5.7" fill="#802a78"/><rect x="35.5" y="9.0" width="2.1" height="11.7" fill="#802a78"/><rect x="39.0" y="14.8" width="2.1" height="5.9" fill="#802a78"/><rect x="42.7" y="11.8" width="2.1" height="8.9" fill="#802a78"/><rect x="46.0" y="21.0" width="2.1" height="5.7" fill="#802a78"/><rect x="49.7" y="11.0" width="2.1" height="9.7" fill="#802a78"/></svg>
<svg style="left:706.8px;top:130.7px;outline:1px solid #1b1b1b" width="57.5" height="42.5"><rect width="57.5" height="42.5" fill="#fff"/><rect x="3.5" y="11.0" width="2.1" height="9.7" fill="#3f8a2a"/><rect x="7.0" y="14.8" width="2.1" height="5.9" fill="#3f8a2a"/><rect x="10.5" y="5.0" width="2.1" height="15.7" fill="#1c6088"/><rect x="14.0" y="13.0" width="2.1" height="7.7" fill="#3f8a2a"/><rect x="17.7" y="21.0" width="2.1" height="5.7" fill="#3f8a2a"/><rect x="21.0" y="21.0" width="2.1" height="10.7" fill="#3f8a2a"/><rect x="25.0" y="21.0" width="2.1" height="4.0" fill="#3f8a2a"/><rect x="28.7" y="21.0" width="2.1" height="2.0" fill="#3f8a2a"/><rect x="32.0" y="21.0" width="2.1" height="5.7" fill="#3f8a2a"/><rect x="35.5" y="9.0" width="2.1" height="11.7" fill="#3f8a2a"/><rect x="39.0" y="14.8" width="2.1" height="5.9" fill="#3f8a2a"/><rect x="42.7" y="11.8" width="2.1" height="8.9" fill="#3f8a2a"/><rect x="46.0" y="21.0" width="2.1" height="5.7" fill="#3f8a2a"/><rect x="49.7" y="11.0" width="2.1" height="9.7" fill="#3f8a2a"/></svg>
<svg style="left:386.8px;top:180.4px;outline:1px solid #1b1b1b" width="57.5" height="42.5"><rect width="57.5" height="42.5" fill="#fff"/><rect x="3.5" y="11.0" width="2.1" height="9.7" fill="#1a6a90"/><rect x="7.0" y="14.8" width="2.1" height="5.9" fill="#1a6a90"/><rect x="10.5" y="5.0" width="2.1" height="15.7" fill="#0f4a66"/><rect x="14.0" y="13.0" width="2.1" height="7.7" fill="#1a6a90"/><rect x="17.7" y="21.0" width="2.1" height="5.7" fill="#1a6a90"/><rect x="21.0" y="21.0" width="2.1" height="10.7" fill="#1a6a90"/><rect x="25.0" y="21.0" width="2.1" height="4.0" fill="#1a6a90"/><rect x="28.7" y="21.0" width="2.1" height="2.0" fill="#1a6a90"/><rect x="32.0" y="21.0" width="2.1" height="5.7" fill="#1a6a90"/><rect x="35.5" y="9.0" width="2.1" height="11.7" fill="#1a6a90"/><rect x="39.0" y="14.8" width="2.1" height="5.9" fill="#1a6a90"/><rect x="42.7" y="11.8" width="2.1" height="8.9" fill="#1a6a90"/><rect x="46.0" y="21.0" width="2.1" height="5.7" fill="#1a6a90"/><rect x="49.7" y="11.0" width="2.1" height="9.7" fill="#1a6a90"/></svg>
<svg style="left:450.8px;top:180.4px;outline:1px solid #1b1b1b" width="57.5" height="42.5"><rect width="57.5" height="42.5" fill="#fff"/><rect x="3.5" y="11.0" width="2.1" height="9.7" fill="#e57a42"/><rect x="7.0" y="14.8" width="2.1" height="5.9" fill="#e57a42"/><rect x="10.5" y="5.0" width="2.1" height="15.7" fill="#b05520"/><rect x="14.0" y="13.0" width="2.1" height="7.7" fill="#e57a42"/><rect x="17.7" y="21.0" width="2.1" height="5.7" fill="#e57a42"/><rect x="21.0" y="21.0" width="2.1" height="10.7" fill="#e57a42"/><rect x="25.0" y="21.0" width="2.1" height="4.0" fill="#e57a42"/><rect x="28.7" y="21.0" width="2.1" height="2.0" fill="#e57a42"/><rect x="32.0" y="21.0" width="2.1" height="5.7" fill="#e57a42"/><rect x="35.5" y="9.0" width="2.1" height="11.7" fill="#e57a42"/><rect x="39.0" y="14.8" width="2.1" height="5.9" fill="#e57a42"/><rect x="42.7" y="11.8" width="2.1" height="8.9" fill="#e57a42"/><rect x="46.0" y="21.0" width="2.1" height="5.7" fill="#e57a42"/><rect x="49.7" y="11.0" width="2.1" height="9.7" fill="#e57a42"/></svg>
<svg style="left:514.8px;top:180.4px;outline:1px solid #1b1b1b" width="57.5" height="42.5"><rect width="57.5" height="42.5" fill="#fff"/><rect x="3.5" y="11.0" width="2.1" height="9.7" fill="#1f7530"/><rect x="7.0" y="14.8" width="2.1" height="5.9" fill="#1f7530"/><rect x="10.5" y="5.0" width="2.1" height="15.7" fill="#0f4a1a"/><rect x="14.0" y="13.0" width="2.1" height="7.7" fill="#1f7530"/><rect x="17.7" y="21.0" width="2.1" height="5.7" fill="#1f7530"/><rect x="21.0" y="21.0" width="2.1" height="10.7" fill="#1f7530"/><rect x="25.0" y="21.0" width="2.1" height="4.0" fill="#1f7530"/><rect x="28.7" y="21.0" width="2.1" height="2.0" fill="#1f7530"/><rect x="32.0" y="21.0" width="2.1" height="5.7" fill="#1f7530"/><rect x="35.5" y="9.0" width="2.1" height="11.7" fill="#1f7530"/><rect x="39.0" y="14.8" width="2.1" height="5.9" fill="#1f7530"/><rect x="42.7" y="11.8" width="2.1" height="8.9" fill="#1f7530"/><rect x="46.0" y="21.0" width="2.1" height="5.7" fill="#1f7530"/><rect x="49.7" y="11.0" width="2.1" height="9.7" fill="#1f7530"/></svg>
<svg style="left:578.8px;top:180.4px;outline:1px solid #1b1b1b" width="57.5" height="42.5"><rect width="57.5" height="42.5" fill="#fff"/><rect x="3.5" y="11.0" width="2.1" height="9.7" fill="#2aa0d0"/><rect x="7.0" y="14.8" width="2.1" height="5.9" fill="#2aa0d0"/><rect x="10.5" y="5.0" width="2.1" height="15.7" fill="#0a6a90"/><rect x="14.0" y="13.0" width="2.1" height="7.7" fill="#2aa0d0"/><rect x="17.7" y="21.0" width="2.1" height="5.7" fill="#2aa0d0"/><rect x="21.0" y="21.0" width="2.1" height="10.7" fill="#2aa0d0"/><rect x="25.0" y="21.0" width="2.1" height="4.0" fill="#2aa0d0"/><rect x="28.7" y="21.0" width="2.1" height="2.0" fill="#2aa0d0"/><rect x="32.0" y="21.0" width="2.1" height="5.7" fill="#2aa0d0"/><rect x="35.5" y="9.0" width="2.1" height="11.7" fill="#2aa0d0"/><rect x="39.0" y="14.8" width="2.1" height="5.9" fill="#2aa0d0"/><rect x="42.7" y="11.8" width="2.1" height="8.9" fill="#2aa0d0"/><rect x="46.0" y="21.0" width="2.1" height="5.7" fill="#2aa0d0"/><rect x="49.7" y="11.0" width="2.1" height="9.7" fill="#2aa0d0"/></svg>
<svg style="left:642.8px;top:180.4px;outline:1px solid #1b1b1b" width="57.5" height="42.5"><rect width="57.5" height="42.5" fill="#fff"/><rect x="3.5" y="11.0" width="2.1" height="9.7" fill="#a53098"/><rect x="7.0" y="14.8" width="2.1" height="5.9" fill="#a53098"/><rect x="10.5" y="5.0" width="2.1" height="15.7" fill="#6a1a60"/><rect x="14.0" y="13.0" width="2.1" height="7.7" fill="#a53098"/><rect x="17.7" y="21.0" width="2.1" height="5.7" fill="#a53098"/><rect x="21.0" y="21.0" width="2.1" height="10.7" fill="#a53098"/><rect x="25.0" y="21.0" width="2.1" height="4.0" fill="#a53098"/><rect x="28.7" y="21.0" width="2.1" height="2.0" fill="#a53098"/><rect x="32.0" y="21.0" width="2.1" height="5.7" fill="#a53098"/><rect x="35.5" y="9.0" width="2.1" height="11.7" fill="#a53098"/><rect x="39.0" y="14.8" width="2.1" height="5.9" fill="#a53098"/><rect x="42.7" y="11.8" width="2.1" height="8.9" fill="#a53098"/><rect x="46.0" y="21.0" width="2.1" height="5.7" fill="#a53098"/><rect x="49.7" y="11.0" width="2.1" height="9.7" fill="#a53098"/></svg>
<svg style="left:706.8px;top:180.4px;outline:1px solid #1b1b1b" width="57.5" height="42.5"><rect width="57.5" height="42.5" fill="#fff"/><rect x="3.5" y="11.0" width="2.1" height="9.7" fill="#4ea72e"/><rect x="7.0" y="14.8" width="2.1" height="5.9" fill="#4ea72e"/><rect x="10.5" y="5.0" width="2.1" height="15.7" fill="#2a6a18"/><rect x="14.0" y="13.0" width="2.1" height="7.7" fill="#4ea72e"/><rect x="17.7" y="21.0" width="2.1" height="5.7" fill="#4ea72e"/><rect x="21.0" y="21.0" width="2.1" height="10.7" fill="#4ea72e"/><rect x="25.0" y="21.0" width="2.1" height="4.0" fill="#4ea72e"/><rect x="28.7" y="21.0" width="2.1" height="2.0" fill="#4ea72e"/><rect x="32.0" y="21.0" width="2.1" height="5.7" fill="#4ea72e"/><rect x="35.5" y="9.0" width="2.1" height="11.7" fill="#4ea72e"/><rect x="39.0" y="14.8" width="2.1" height="5.9" fill="#4ea72e"/><rect x="42.7" y="11.8" width="2.1" height="8.9" fill="#4ea72e"/><rect x="46.0" y="21.0" width="2.1" height="5.7" fill="#4ea72e"/><rect x="49.7" y="11.0" width="2.1" height="9.7" fill="#4ea72e"/></svg>
<svg style="left:386.8px;top:230.1px;outline:1px solid #1b1b1b" width="57.5" height="42.5"><rect width="57.5" height="42.5" fill="#fff"/><rect x="3.5" y="11.0" width="2.1" height="9.7" fill="#5fb6de"/><rect x="7.0" y="14.8" width="2.1" height="5.9" fill="#5fb6de"/><rect x="10.5" y="5.0" width="2.1" height="15.7" fill="#0f2f40"/><rect x="14.0" y="13.0" width="2.1" height="7.7" fill="#5fb6de"/><rect x="17.7" y="21.0" width="2.1" height="5.7" fill="#5fb6de"/><rect x="21.0" y="21.0" width="2.1" height="10.7" fill="#5fb6de"/><rect x="25.0" y="21.0" width="2.1" height="4.0" fill="#5fb6de"/><rect x="28.7" y="21.0" width="2.1" height="2.0" fill="#5fb6de"/><rect x="32.0" y="21.0" width="2.1" height="5.7" fill="#5fb6de"/><rect x="35.5" y="9.0" width="2.1" height="11.7" fill="#5fb6de"/><rect x="39.0" y="14.8" width="2.1" height="5.9" fill="#5fb6de"/><rect x="42.7" y="11.8" width="2.1" height="8.9" fill="#5fb6de"/><rect x="46.0" y="21.0" width="2.1" height="5.7" fill="#5fb6de"/><rect x="49.7" y="11.0" width="2.1" height="9.7" fill="#5fb6de"/></svg>
<svg style="left:450.8px;top:230.1px;outline:1px solid #1b1b1b" width="57.5" height="42.5"><rect width="57.5" height="42.5" fill="#fff"/><rect x="3.5" y="11.0" width="2.1" height="9.7" fill="#eeb595"/><rect x="7.0" y="14.8" width="2.1" height="5.9" fill="#eeb595"/><rect x="10.5" y="5.0" width="2.1" height="15.7" fill="#5a2010"/><rect x="14.0" y="13.0" width="2.1" height="7.7" fill="#eeb595"/><rect x="17.7" y="21.0" width="2.1" height="5.7" fill="#eeb595"/><rect x="21.0" y="21.0" width="2.1" height="10.7" fill="#eeb595"/><rect x="25.0" y="21.0" width="2.1" height="4.0" fill="#eeb595"/><rect x="28.7" y="21.0" width="2.1" height="2.0" fill="#eeb595"/><rect x="32.0" y="21.0" width="2.1" height="5.7" fill="#eeb595"/><rect x="35.5" y="9.0" width="2.1" height="11.7" fill="#eeb595"/><rect x="39.0" y="14.8" width="2.1" height="5.9" fill="#eeb595"/><rect x="42.7" y="11.8" width="2.1" height="8.9" fill="#eeb595"/><rect x="46.0" y="21.0" width="2.1" height="5.7" fill="#eeb595"/><rect x="49.7" y="11.0" width="2.1" height="9.7" fill="#eeb595"/></svg>
<svg style="left:514.8px;top:230.1px;outline:1px solid #1b1b1b" width="57.5" height="42.5"><rect width="57.5" height="42.5" fill="#fff"/><rect x="3.5" y="11.0" width="2.1" height="9.7" fill="#62c46a"/><rect x="7.0" y="14.8" width="2.1" height="5.9" fill="#62c46a"/><rect x="10.5" y="5.0" width="2.1" height="15.7" fill="#0a2a10"/><rect x="14.0" y="13.0" width="2.1" height="7.7" fill="#62c46a"/><rect x="17.7" y="21.0" width="2.1" height="5.7" fill="#62c46a"/><rect x="21.0" y="21.0" width="2.1" height="10.7" fill="#62c46a"/><rect x="25.0" y="21.0" width="2.1" height="4.0" fill="#62c46a"/><rect x="28.7" y="21.0" width="2.1" height="2.0" fill="#62c46a"/><rect x="32.0" y="21.0" width="2.1" height="5.7" fill="#62c46a"/><rect x="35.5" y="9.0" width="2.1" height="11.7" fill="#62c46a"/><rect x="39.0" y="14.8" width="2.1" height="5.9" fill="#62c46a"/><rect x="42.7" y="11.8" width="2.1" height="8.9" fill="#62c46a"/><rect x="46.0" y="21.0" width="2.1" height="5.7" fill="#62c46a"/><rect x="49.7" y="11.0" width="2.1" height="9.7" fill="#62c46a"/></svg>
<svg style="left:578.8px;top:230.1px;outline:1px solid #1b1b1b" width="57.5" height="42.5"><rect width="57.5" height="42.5" fill="#fff"/><rect x="3.5" y="11.0" width="2.1" height="9.7" fill="#6cc6ea"/><rect x="7.0" y="14.8" width="2.1" height="5.9" fill="#6cc6ea"/><rect x="10.5" y="5.0" width="2.1" height="15.7" fill="#0a3a50"/><rect x="14.0" y="13.0" width="2.1" height="7.7" fill="#6cc6ea"/><rect x="17.7" y="21.0" width="2.1" height="5.7" fill="#6cc6ea"/><rect x="21.0" y="21.0" width="2.1" height="10.7" fill="#6cc6ea"/><rect x="25.0" y="21.0" width="2.1" height="4.0" fill="#6cc6ea"/><rect x="28.7" y="21.0" width="2.1" height="2.0" fill="#6cc6ea"/><rect x="32.0" y="21.0" width="2.1" height="5.7" fill="#6cc6ea"/><rect x="35.5" y="9.0" width="2.1" height="11.7" fill="#6cc6ea"/><rect x="39.0" y="14.8" width="2.1" height="5.9" fill="#6cc6ea"/><rect x="42.7" y="11.8" width="2.1" height="8.9" fill="#6cc6ea"/><rect x="46.0" y="21.0" width="2.1" height="5.7" fill="#6cc6ea"/><rect x="49.7" y="11.0" width="2.1" height="9.7" fill="#6cc6ea"/></svg>
<svg style="left:642.8px;top:230.1px;outline:1px solid #1b1b1b" width="57.5" height="42.5"><rect width="57.5" height="42.5" fill="#fff"/><rect x="3.5" y="11.0" width="2.1" height="9.7" fill="#d68ad2"/><rect x="7.0" y="14.8" width="2.1" height="5.9" fill="#d68ad2"/><rect x="10.5" y="5.0" width="2.1" height="15.7" fill="#2a0a28"/><rect x="14.0" y="13.0" width="2.1" height="7.7" fill="#d68ad2"/><rect x="17.7" y="21.0" width="2.1" height="5.7" fill="#d68ad2"/><rect x="21.0" y="21.0" width="2.1" height="10.7" fill="#d68ad2"/><rect x="25.0" y="21.0" width="2.1" height="4.0" fill="#d68ad2"/><rect x="28.7" y="21.0" width="2.1" height="2.0" fill="#d68ad2"/><rect x="32.0" y="21.0" width="2.1" height="5.7" fill="#d68ad2"/><rect x="35.5" y="9.0" width="2.1" height="11.7" fill="#d68ad2"/><rect x="39.0" y="14.8" width="2.1" height="5.9" fill="#d68ad2"/><rect x="42.7" y="11.8" width="2.1" height="8.9" fill="#d68ad2"/><rect x="46.0" y="21.0" width="2.1" height="5.7" fill="#d68ad2"/><rect x="49.7" y="11.0" width="2.1" height="9.7" fill="#d68ad2"/></svg>
<svg style="left:706.8px;top:230.1px;outline:1px solid #1b1b1b" width="57.5" height="42.5"><rect width="57.5" height="42.5" fill="#fff"/><rect x="3.5" y="11.0" width="2.1" height="9.7" fill="#95d585"/><rect x="7.0" y="14.8" width="2.1" height="5.9" fill="#95d585"/><rect x="10.5" y="5.0" width="2.1" height="15.7" fill="#1a3a10"/><rect x="14.0" y="13.0" width="2.1" height="7.7" fill="#95d585"/><rect x="17.7" y="21.0" width="2.1" height="5.7" fill="#95d585"/><rect x="21.0" y="21.0" width="2.1" height="10.7" fill="#95d585"/><rect x="25.0" y="21.0" width="2.1" height="4.0" fill="#95d585"/><rect x="28.7" y="21.0" width="2.1" height="2.0" fill="#95d585"/><rect x="32.0" y="21.0" width="2.1" height="5.7" fill="#95d585"/><rect x="35.5" y="9.0" width="2.1" height="11.7" fill="#95d585"/><rect x="39.0" y="14.8" width="2.1" height="5.9" fill="#95d585"/><rect x="42.7" y="11.8" width="2.1" height="8.9" fill="#95d585"/><rect x="46.0" y="21.0" width="2.1" height="5.7" fill="#95d585"/><rect x="49.7" y="11.0" width="2.1" height="9.7" fill="#95d585"/></svg>
<svg style="left:386.8px;top:279.8px;outline:1px solid #1b1b1b" width="57.5" height="42.5"><rect width="57.5" height="42.5" fill="#fff"/><rect x="3.5" y="11.0" width="2.1" height="9.7" fill="#4a90d2"/><rect x="7.0" y="14.8" width="2.1" height="5.9" fill="#4a90d2"/><rect x="10.5" y="5.0" width="2.1" height="15.7" fill="#2a2a2a"/><rect x="14.0" y="13.0" width="2.1" height="7.7" fill="#4a90d2"/><rect x="17.7" y="21.0" width="2.1" height="5.7" fill="#4a90d2"/><rect x="21.0" y="21.0" width="2.1" height="10.7" fill="#4a90d2"/><rect x="25.0" y="21.0" width="2.1" height="4.0" fill="#4a90d2"/><rect x="28.7" y="21.0" width="2.1" height="2.0" fill="#4a90d2"/><rect x="32.0" y="21.0" width="2.1" height="5.7" fill="#4a90d2"/><rect x="35.5" y="9.0" width="2.1" height="11.7" fill="#4a90d2"/><rect x="39.0" y="14.8" width="2.1" height="5.9" fill="#4a90d2"/><rect x="42.7" y="11.8" width="2.1" height="8.9" fill="#4a90d2"/><rect x="46.0" y="21.0" width="2.1" height="5.7" fill="#4a90d2"/><rect x="49.7" y="11.0" width="2.1" height="9.7" fill="#4a90d2"/></svg>
<svg style="left:450.8px;top:279.8px;outline:1px solid #1b1b1b" width="57.5" height="42.5"><rect width="57.5" height="42.5" fill="#fff"/><rect x="3.5" y="11.0" width="2.1" height="9.7" fill="#3f78b8"/><rect x="7.0" y="14.8" width="2.1" height="5.9" fill="#3f78b8"/><rect x="10.5" y="5.0" width="2.1" height="15.7" fill="#c4c4c4"/><rect x="14.0" y="13.0" width="2.1" height="7.7" fill="#3f78b8"/><rect x="17.7" y="21.0" width="2.1" height="5.7" fill="#3f78b8"/><rect x="21.0" y="21.0" width="2.1" height="10.7" fill="#3f78b8"/><rect x="25.0" y="21.0" width="2.1" height="4.0" fill="#3f78b8"/><rect x="28.7" y="21.0" width="2.1" height="2.0" fill="#3f78b8"/><rect x="32.0" y="21.0" width="2.1" height="5.7" fill="#3f78b8"/><rect x="35.5" y="9.0" width="2.1" height="11.7" fill="#3f78b8"/><rect x="39.0" y="14.8" width="2.1" height="5.9" fill="#3f78b8"/><rect x="42.7" y="11.8" width="2.1" height="8.9" fill="#3f78b8"/><rect x="46.0" y="21.0" width="2.1" height="5.7" fill="#3f78b8"/><rect x="49.7" y="11.0" width="2.1" height="9.7" fill="#3f78b8"/></svg>
<svg style="left:514.8px;top:279.8px;outline:1px solid #1b1b1b" width="57.5" height="42.5"><rect width="57.5" height="42.5" fill="#fff"/><rect x="3.5" y="11.0" width="2.1" height="9.7" fill="#262626"/><rect x="7.0" y="14.8" width="2.1" height="5.9" fill="#262626"/><rect x="10.5" y="5.0" width="2.1" height="15.7" fill="#d42424"/><rect x="14.0" y="13.0" width="2.1" height="7.7" fill="#262626"/><rect x="17.7" y="21.0" width="2.1" height="5.7" fill="#262626"/><rect x="21.0" y="21.0" width="2.1" height="10.7" fill="#262626"/><rect x="25.0" y="21.0" width="2.1" height="4.0" fill="#262626"/><rect x="28.7" y="21.0" width="2.1" height="2.0" fill="#262626"/><rect x="32.0" y="21.0" width="2.1" height="5.7" fill="#262626"/><rect x="35.5" y="9.0" width="2.1" height="11.7" fill="#262626"/><rect x="39.0" y="14.8" width="2.1" height="5.9" fill="#262626"/><rect x="42.7" y="11.8" width="2.1" height="8.9" fill="#262626"/><rect x="46.0" y="21.0" width="2.1" height="5.7" fill="#262626"/><rect x="49.7" y="11.0" width="2.1" height="9.7" fill="#262626"/></svg>
<svg style="left:578.8px;top:279.8px;outline:1px solid #1b1b1b" width="57.5" height="42.5"><rect width="57.5" height="42.5" fill="#fff"/><rect x="3.5" y="11.0" width="2.1" height="9.7" fill="#222222"/><rect x="7.0" y="14.8" width="2.1" height="5.9" fill="#222222"/><rect x="10.5" y="5.0" width="2.1" height="15.7" fill="#3a80c8"/><rect x="14.0" y="13.0" width="2.1" height="7.7" fill="#222222"/><rect x="17.7" y="21.0" width="2.1" height="5.7" fill="#222222"/><rect x="21.0" y="21.0" width="2.1" height="10.7" fill="#222222"/><rect x="25.0" y="21.0" width="2.1" height="4.0" fill="#222222"/><rect x="28.7" y="21.0" width="2.1" height="2.0" fill="#222222"/><rect x="32.0" y="21.0" width="2.1" height="5.7" fill="#222222"/><rect x="35.5" y="9.0" width="2.1" height="11.7" fill="#222222"/><rect x="39.0" y="14.8" width="2.1" height="5.9" fill="#222222"/><rect x="42.7" y="11.8" width="2.1" height="8.9" fill="#222222"/><rect x="46.0" y="21.0" width="2.1" height="5.7" fill="#222222"/><rect x="49.7" y="11.0" width="2.1" height="9.7" fill="#222222"/></svg>
<svg style="left:642.8px;top:279.8px;outline:1px solid #1b1b1b" width="57.5" height="42.5"><rect width="57.5" height="42.5" fill="#fff"/><rect x="3.5" y="11.0" width="2.1" height="9.7" fill="#46689a"/><rect x="7.0" y="14.8" width="2.1" height="5.9" fill="#46689a"/><rect x="10.5" y="5.0" width="2.1" height="15.7" fill="#c82828"/><rect x="14.0" y="13.0" width="2.1" height="7.7" fill="#46689a"/><rect x="17.7" y="21.0" width="2.1" height="5.7" fill="#46689a"/><rect x="21.0" y="21.0" width="2.1" height="10.7" fill="#46689a"/><rect x="25.0" y="21.0" width="2.1" height="4.0" fill="#46689a"/><rect x="28.7" y="21.0" width="2.1" height="2.0" fill="#46689a"/><rect x="32.0" y="21.0" width="2.1" height="5.7" fill="#46689a"/><rect x="35.5" y="9.0" width="2.1" height="11.7" fill="#46689a"/><rect x="39.0" y="14.8" width="2.1" height="5.9" fill="#46689a"/><rect x="42.7" y="11.8" width="2.1" height="8.9" fill="#46689a"/><rect x="46.0" y="21.0" width="2.1" height="5.7" fill="#46689a"/><rect x="49.7" y="11.0" width="2.1" height="9.7" fill="#46689a"/></svg>
<svg style="left:706.8px;top:279.8px;outline:1px solid #1b1b1b" width="57.5" height="42.5"><rect width="57.5" height="42.5" fill="#fff"/><rect x="3.5" y="11.0" width="2.1" height="9.7" fill="#3a7ac0"/><rect x="7.0" y="14.8" width="2.1" height="5.9" fill="#3a7ac0"/><rect x="10.5" y="5.0" width="2.1" height="15.7" fill="#262626"/><rect x="14.0" y="13.0" width="2.1" height="7.7" fill="#3a7ac0"/><rect x="17.7" y="21.0" width="2.1" height="5.7" fill="#3a7ac0"/><rect x="21.0" y="21.0" width="2.1" height="10.7" fill="#3a7ac0"/><rect x="25.0" y="21.0" width="2.1" height="4.0" fill="#3a7ac0"/><rect x="28.7" y="21.0" width="2.1" height="2.0" fill="#3a7ac0"/><rect x="32.0" y="21.0" width="2.1" height="5.7" fill="#3a7ac0"/><rect x="35.5" y="9.0" width="2.1" height="11.7" fill="#3a7ac0"/><rect x="39.0" y="14.8" width="2.1" height="5.9" fill="#3a7ac0"/><rect x="42.7" y="11.8" width="2.1" height="8.9" fill="#3a7ac0"/><rect x="46.0" y="21.0" width="2.1" height="5.7" fill="#3a7ac0"/><rect x="49.7" y="11.0" width="2.1" height="9.7" fill="#3a7ac0"/></svg>
<svg style="left:386.8px;top:329.5px;outline:1px solid #1b1b1b" width="57.5" height="42.5"><rect width="57.5" height="42.5" fill="#fff"/><rect x="3.5" y="11.0" width="2.1" height="9.7" fill="#4c4c4c"/><rect x="7.0" y="14.8" width="2.1" height="5.9" fill="#4c4c4c"/><rect x="10.5" y="5.0" width="2.1" height="15.7" fill="#5cac72"/><rect x="14.0" y="13.0" width="2.1" height="7.7" fill="#4c4c4c"/><rect x="17.7" y="21.0" width="2.1" height="5.7" fill="#4c4c4c"/><rect x="21.0" y="21.0" width="2.1" height="10.7" fill="#4c4c4c"/><rect x="25.0" y="21.0" width="2.1" height="4.0" fill="#4c4c4c"/><rect x="28.7" y="21.0" width="2.1" height="2.0" fill="#4c4c4c"/><rect x="32.0" y="21.0" width="2.1" height="5.7" fill="#4c4c4c"/><rect x="35.5" y="9.0" width="2.1" height="11.7" fill="#4c4c4c"/><rect x="39.0" y="14.8" width="2.1" height="5.9" fill="#4c4c4c"/><rect x="42.7" y="11.8" width="2.1" height="8.9" fill="#4c4c4c"/><rect x="46.0" y="21.0" width="2.1" height="5.7" fill="#4c4c4c"/><rect x="49.7" y="11.0" width="2.1" height="9.7" fill="#4c4c4c"/></svg>
<svg style="left:450.8px;top:329.5px;outline:1px solid #1b1b1b" width="57.5" height="42.5"><rect width="57.5" height="42.5" fill="#fff"/><rect x="3.5" y="11.0" width="2.1" height="9.7" fill="#4a7cc2"/><rect x="7.0" y="14.8" width="2.1" height="5.9" fill="#4a7cc2"/><rect x="10.5" y="5.0" width="2.1" height="15.7" fill="#4a9a60"/><rect x="14.0" y="13.0" width="2.1" height="7.7" fill="#4a7cc2"/><rect x="17.7" y="21.0" width="2.1" height="5.7" fill="#4a7cc2"/><rect x="21.0" y="21.0" width="2.1" height="10.7" fill="#4a7cc2"/><rect x="25.0" y="21.0" width="2.1" height="4.0" fill="#4a7cc2"/><rect x="28.7" y="21.0" width="2.1" height="2.0" fill="#4a7cc2"/><rect x="32.0" y="21.0" width="2.1" height="5.7" fill="#4a7cc2"/><rect x="35.5" y="9.0" width="2.1" height="11.7" fill="#4a7cc2"/><rect x="39.0" y="14.8" width="2.1" height="5.9" fill="#4a7cc2"/><rect x="42.7" y="11.8" width="2.1" height="8.9" fill="#4a7cc2"/><rect x="46.0" y="21.0" width="2.1" height="5.7" fill="#4a7cc2"/><rect x="49.7" y="11.0" width="2.1" height="9.7" fill="#4a7cc2"/></svg>
<svg style="left:514.8px;top:329.5px;outline:1px solid #1b1b1b" width="57.5" height="42.5"><rect width="57.5" height="42.5" fill="#fff"/><rect x="3.5" y="11.0" width="2.1" height="9.7" fill="#c4ead0"/><rect x="7.0" y="14.8" width="2.1" height="5.9" fill="#c4ead0"/><rect x="10.5" y="5.0" width="2.1" height="15.7" fill="#78c488"/><rect x="14.0" y="13.0" width="2.1" height="7.7" fill="#c4ead0"/><rect x="17.7" y="21.0" width="2.1" height="5.7" fill="#c4ead0"/><rect x="21.0" y="21.0" width="2.1" height="10.7" fill="#c4ead0"/><rect x="25.0" y="21.0" width="2.1" height="4.0" fill="#c4ead0"/><rect x="28.7" y="21.0" width="2.1" height="2.0" fill="#c4ead0"/><rect x="32.0" y="21.0" width="2.1" height="5.7" fill="#c4ead0"/><rect x="35.5" y="9.0" width="2.1" height="11.7" fill="#c4ead0"/><rect x="39.0" y="14.8" width="2.1" height="5.9" fill="#c4ead0"/><rect x="42.7" y="11.8" width="2.1" height="8.9" fill="#c4ead0"/><rect x="46.0" y="21.0" width="2.1" height="5.7" fill="#c4ead0"/><rect x="49.7" y="11.0" width="2.1" height="9.7" fill="#c4ead0"/></svg>
<svg style="left:578.8px;top:329.5px;outline:1px solid #1b1b1b" width="57.5" height="42.5"><rect width="57.5" height="42.5" fill="#fff"/><rect x="3.5" y="11.0" width="2.1" height="9.7" fill="#2aa85e"/><rect x="7.0" y="14.8" width="2.1" height="5.9" fill="#2aa85e"/><rect x="10.5" y="5.0" width="2.1" height="15.7" fill="#2aa85e"/><rect x="14.0" y="13.0" width="2.1" height="7.7" fill="#2aa85e"/><rect x="17.7" y="21.0" width="2.1" height="5.7" fill="#2aa85e"/><rect x="21.0" y="21.0" width="2.1" height="10.7" fill="#2aa85e"/><rect x="25.0" y="21.0" width="2.1" height="4.0" fill="#2aa85e"/><rect x="28.7" y="21.0" width="2.1" height="2.0" fill="#2aa85e"/><rect x="32.0" y="21.0" width="2.1" height="5.7" fill="#2aa85e"/><rect x="35.5" y="9.0" width="2.1" height="11.7" fill="#2aa85e"/><rect x="39.0" y="14.8" width="2.1" height="5.9" fill="#2aa85e"/><rect x="42.7" y="11.8" width="2.1" height="8.9" fill="#2aa85e"/><rect x="46.0" y="21.0" width="2.1" height="5.7" fill="#2aa85e"/><rect x="49.7" y="11.0" width="2.1" height="9.7" fill="#2aa85e"/></svg>
<svg style="left:642.8px;top:329.5px;outline:1px solid #1b1b1b" width="57.5" height="42.5"><rect width="57.5" height="42.5" fill="#fff"/><rect x="3.5" y="11.0" width="2.1" height="9.7" fill="#1c2a42"/><rect x="7.0" y="14.8" width="2.1" height="5.9" fill="#1c2a42"/><rect x="10.5" y="5.0" width="2.1" height="15.7" fill="#4a9a50"/><rect x="14.0" y="13.0" width="2.1" height="7.7" fill="#1c2a42"/><rect x="17.7" y="21.0" width="2.1" height="5.7" fill="#1c2a42"/><rect x="21.0" y="21.0" width="2.1" height="10.7" fill="#1c2a42"/><rect x="25.0" y="21.0" width="2.1" height="4.0" fill="#1c2a42"/><rect x="28.7" y="21.0" width="2.1" height="2.0" fill="#1c2a42"/><rect x="32.0" y="21.0" width="2.1" height="5.7" fill="#1c2a42"/><rect x="35.5" y="9.0" width="2.1" height="11.7" fill="#1c2a42"/><rect x="39.0" y="14.8" width="2.1" height="5.9" fill="#1c2a42"/><rect x="42.7" y="11.8" width="2.1" height="8.9" fill="#1c2a42"/><rect x="46.0" y="21.0" width="2.1" height="5.7" fill="#1c2a42"/><rect x="49.7" y="11.0" width="2.1" height="9.7" fill="#1c2a42"/></svg>
<svg style="left:706.8px;top:329.5px;outline:1px solid #1b1b1b" width="57.5" height="42.5"><rect width="57.5" height="42.5" fill="#fff"/><rect x="3.5" y="11.0" width="2.1" height="9.7" fill="#1c3a5a"/><rect x="7.0" y="14.8" width="2.1" height="5.9" fill="#1c3a5a"/><rect x="10.5" y="5.0" width="2.1" height="15.7" fill="#2a6aa0"/><rect x="14.0" y="13.0" width="2.1" height="7.7" fill="#1c3a5a"/><rect x="17.7" y="21.0" width="2.1" height="5.7" fill="#1c3a5a"/><rect x="21.0" y="21.0" width="2.1" height="10.7" fill="#1c3a5a"/><rect x="25.0" y="21.0" width="2.1" height="4.0" fill="#1c3a5a"/><rect x="28.7" y="21.0" width="2.1" height="2.0" fill="#1c3a5a"/><rect x="32.0" y="21.0" width="2.1" height="5.7" fill="#1c3a5a"/><rect x="35.5" y="9.0" width="2.1" height="11.7" fill="#1c3a5a"/><rect x="39.0" y="14.8" width="2.1" height="5.9" fill="#1c3a5a"/><rect x="42.7" y="11.8" width="2.1" height="8.9" fill="#1c3a5a"/><rect x="46.0" y="21.0" width="2.1" height="5.7" fill="#1c3a5a"/><rect x="49.7" y="11.0" width="2.1" height="9.7" fill="#1c3a5a"/></svg>



<div class="a" style="left:447px;top:127.3px;width:71.7px;height:47.5px;border:2.4px solid #c8232b"></div>
<div class="a" style="left:508.5px;top:129.7px;width:6px;height:43px;background:#262626"></div><div class="a" style="left:510.2px;top:129.7px;width:2.2px;height:43px;background:#6a6a6a"></div>
</body></html>
